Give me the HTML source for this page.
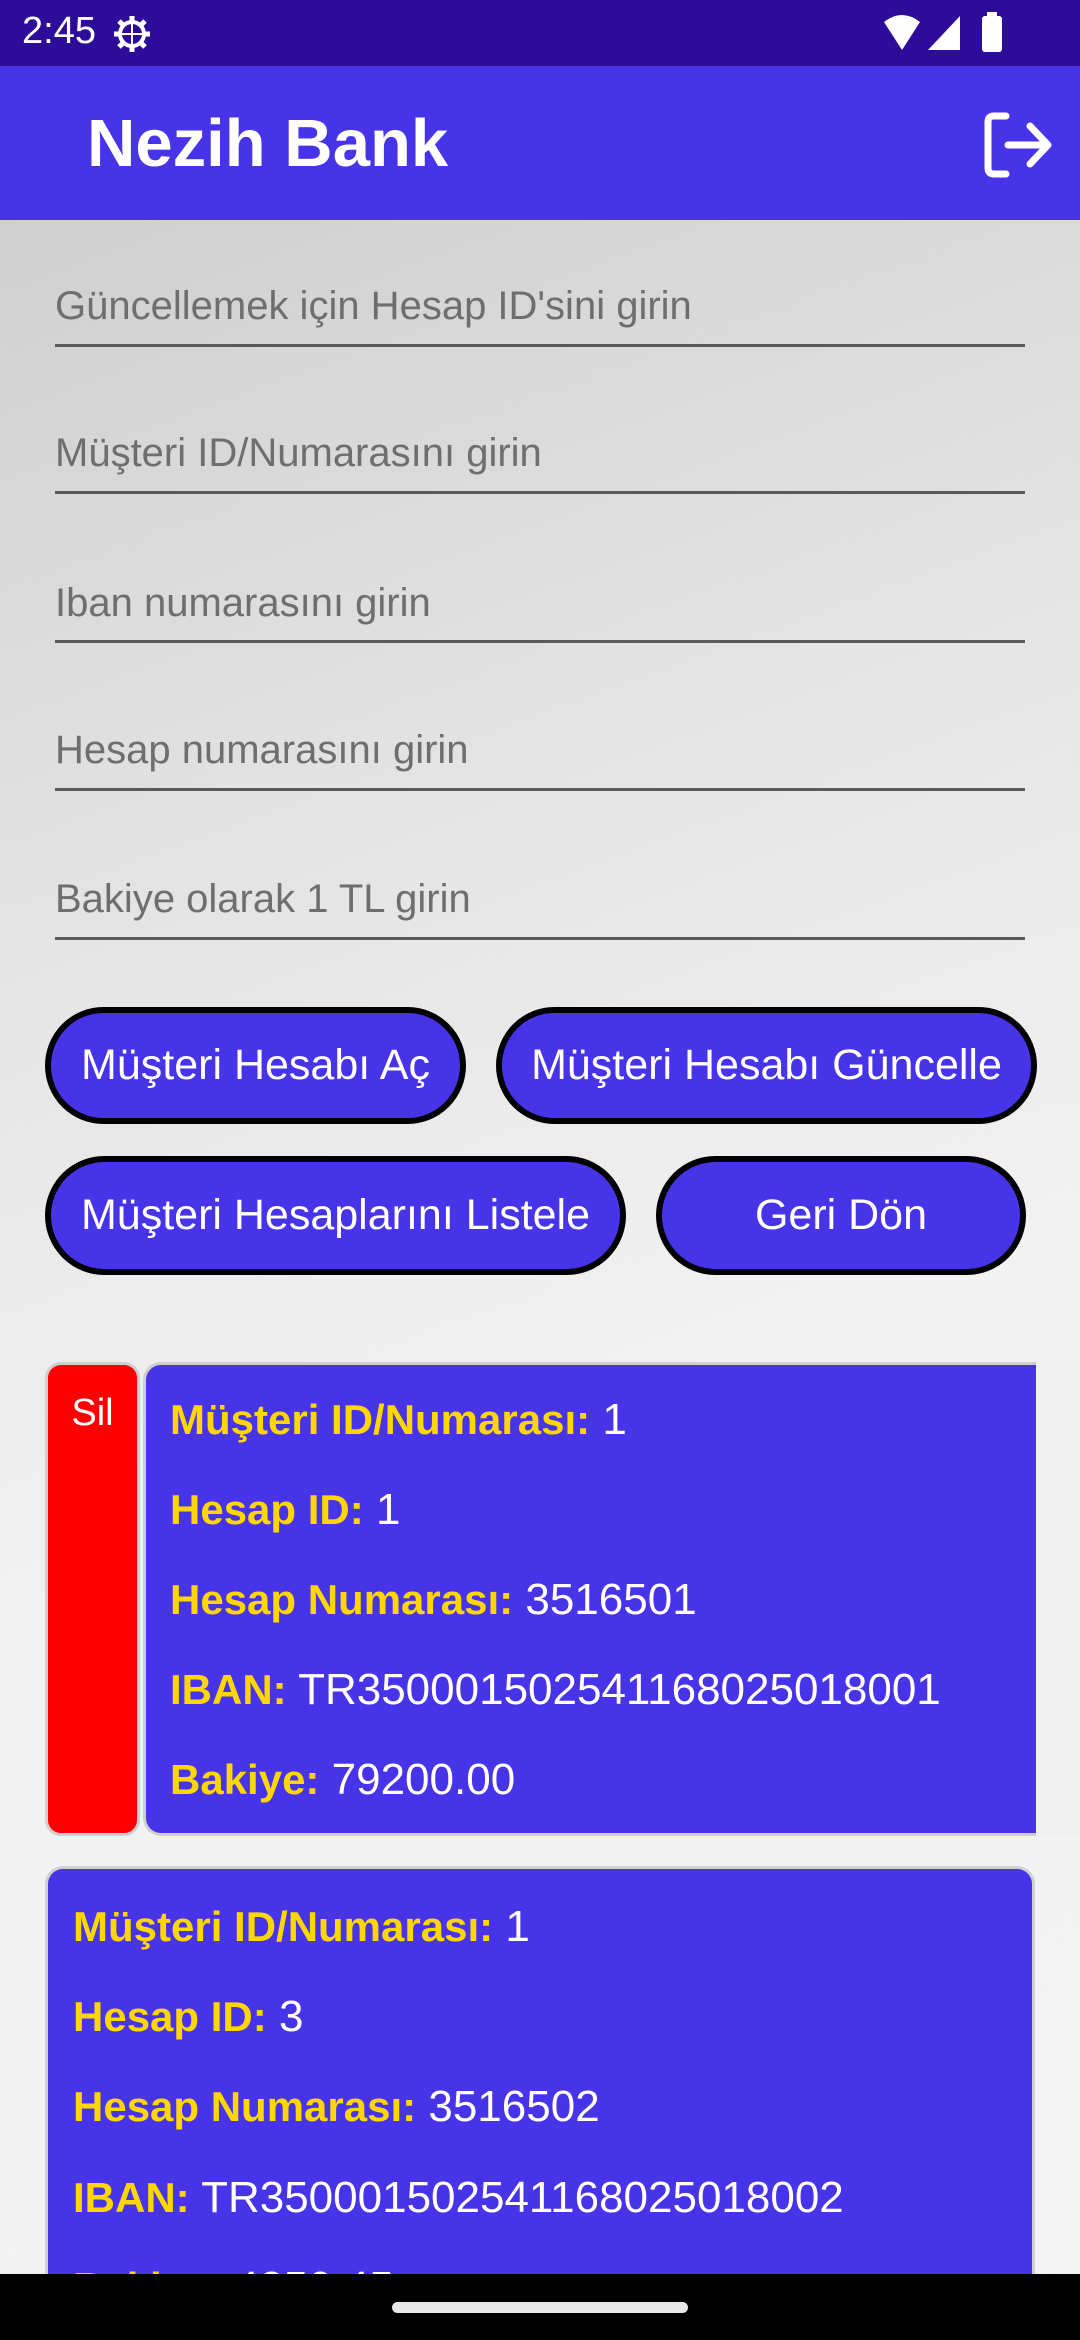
<!DOCTYPE html>
<html style="overflow:hidden;height:2340px"><head><meta charset="utf-8"><style>
*{margin:0;padding:0;box-sizing:border-box}
html,body{width:1080px;height:2340px;overflow:hidden}
body{position:relative;font-family:"Liberation Sans",sans-serif;background:linear-gradient(160deg,#c9c9c9 0%,#e4e4e4 35%,#f2f2f2 60%,#f3f3f3 100%)}
.abs{position:absolute}
.status{left:0;top:0;width:1080px;height:66px;background:#2c0c98}
.appbar{left:0;top:66px;width:1080px;height:154px;background:#4834e8}
.hint{left:55px;font-size:40px;color:#6e6e6e;line-height:44px;white-space:nowrap}
.line{left:55px;width:970px;height:3px;background:#5a5a5a}
.btn{border:6px solid #000;background:#4834e8;border-radius:60px;color:#fff;font-size:43px;display:flex;align-items:center;justify-content:center;white-space:nowrap}
.card{background:#4834e8;border:3px solid #cfcfcf;border-radius:18px;overflow:hidden}
.row{position:absolute;font-size:44px;color:#fff;white-space:nowrap;line-height:50px}
.row b{color:#ffd700;font-size:42px}
</style></head><body>
<div class="abs status">
  <div class="abs" style="left:22px;top:10px;color:#fff;font-size:38px">2:45</div>
  <svg class="abs" style="left:112px;top:14px" width="40" height="40" viewBox="0 0 40 40"><circle cx="20" cy="20" r="12" fill="none" stroke="#fff" stroke-width="4"/><g stroke="#fff" stroke-width="5"><line x1="20" y1="2" x2="20" y2="8"/><line x1="20" y1="32" x2="20" y2="38"/><line x1="2" y1="20" x2="8" y2="20"/><line x1="32" y1="20" x2="38" y2="20"/><line x1="7" y1="7" x2="11" y2="11"/><line x1="29" y1="29" x2="33" y2="33"/><line x1="33" y1="7" x2="29" y2="11"/><line x1="7" y1="33" x2="11" y2="29"/></g><line x1="20" y1="10" x2="20" y2="30" stroke="#fff" stroke-width="2"/><line x1="10" y1="20" x2="30" y2="20" stroke="#fff" stroke-width="2"/></svg>
  <svg class="abs" style="left:882px;top:14px" width="40" height="38" viewBox="0 0 40 38"><path d="M2 8 Q20 -6 38 8 L20 36 Z" fill="#fff"/></svg>
  <svg class="abs" style="left:926px;top:14px" width="36" height="38" viewBox="0 0 36 38"><path d="M34 2 L34 36 L2 36 Z" fill="#fff"/></svg>
  <div class="abs" style="left:982px;top:16px;width:20px;height:36px;background:#fff;border-radius:3px"></div>
  <div class="abs" style="left:987px;top:12px;width:10px;height:5px;background:#fff"></div>
</div>
<div class="abs appbar">
  <div class="abs" style="left:87px;top:38px;color:#fff;font-size:67px;font-weight:bold;line-height:80px">Nezih Bank</div>
  <svg class="abs" style="left:984px;top:46px" width="72" height="66" viewBox="0 0 72 66"><path d="M22 4 H10 Q4 4 4 10 V56 Q4 62 10 62 H22" fill="none" stroke="#fff" stroke-width="7" stroke-linecap="round"/><path d="M24 33 H62 M46 14 L64 33 L46 52" fill="none" stroke="#fff" stroke-width="7" stroke-linecap="round" stroke-linejoin="round"/></svg>
</div>

<div class="abs hint" style="top:284px">Güncellemek için Hesap ID'sini girin</div>
<div class="abs line" style="top:344px"></div>
<div class="abs hint" style="top:431px">Müşteri ID/Numarasını girin</div>
<div class="abs line" style="top:491px"></div>
<div class="abs hint" style="top:581px">Iban numarasını girin</div>
<div class="abs line" style="top:640px"></div>
<div class="abs hint" style="top:728px">Hesap numarasını girin</div>
<div class="abs line" style="top:788px"></div>
<div class="abs hint" style="top:877px">Bakiye olarak 1 TL girin</div>
<div class="abs line" style="top:937px"></div>

<div class="abs btn" style="left:45px;top:1007px;width:421px;height:117px">Müşteri Hesabı Aç</div>
<div class="abs btn" style="left:496px;top:1007px;width:541px;height:117px">Müşteri Hesabı Güncelle</div>
<div class="abs btn" style="left:45px;top:1156px;width:581px;height:119px">Müşteri Hesaplarını Listele</div>
<div class="abs btn" style="left:656px;top:1156px;width:370px;height:119px">Geri Dön</div>

<div class="abs" style="left:45px;top:1362px;width:95px;height:474px;background:#ff0000;border:3px solid #cfcfcf;border-radius:16px"></div>
<div class="abs" style="left:45px;top:1392px;width:95px;text-align:center;color:#fff;font-size:38px">Sil</div>
<div class="abs card" style="left:143px;top:1362px;width:960px;height:474px;border-right:none;border-radius:18px 0 0 18px">
  <div class="row" style="left:24px;top:30px"><b>Müşteri ID/Numarası:</b> 1</div>
  <div class="row" style="left:24px;top:120px"><b>Hesap ID:</b> 1</div>
  <div class="row" style="left:24px;top:210px"><b>Hesap Numarası:</b> 3516501</div>
  <div class="row" style="left:24px;top:300px"><b>IBAN:</b> TR350001502541168025018001</div>
  <div class="row" style="left:24px;top:390px"><b>Bakiye:</b> 79200.00</div>
</div>
<div class="abs" style="left:1036px;top:1362px;width:44px;height:474px;background:#f0f0f0"></div>

<div class="abs card" style="left:45px;top:1866px;width:990px;height:460px;border-bottom:none">
  <div class="row" style="left:25px;top:33px"><b>Müşteri ID/Numarası:</b> 1</div>
  <div class="row" style="left:25px;top:123px"><b>Hesap ID:</b> 3</div>
  <div class="row" style="left:25px;top:213px"><b>Hesap Numarası:</b> 3516502</div>
  <div class="row" style="left:25px;top:304px"><b>IBAN:</b> TR350001502541168025018002</div>
  <div class="row" style="left:25px;top:394px"><b>Bakiye:</b> 4250.45</div>
</div>

<div class="abs" style="left:0;top:2274px;width:1080px;height:66px;background:#000"></div>
<div class="abs" style="left:392px;top:2302px;width:296px;height:11px;background:#e8e8e8;border-radius:6px"></div>
</body></html>
